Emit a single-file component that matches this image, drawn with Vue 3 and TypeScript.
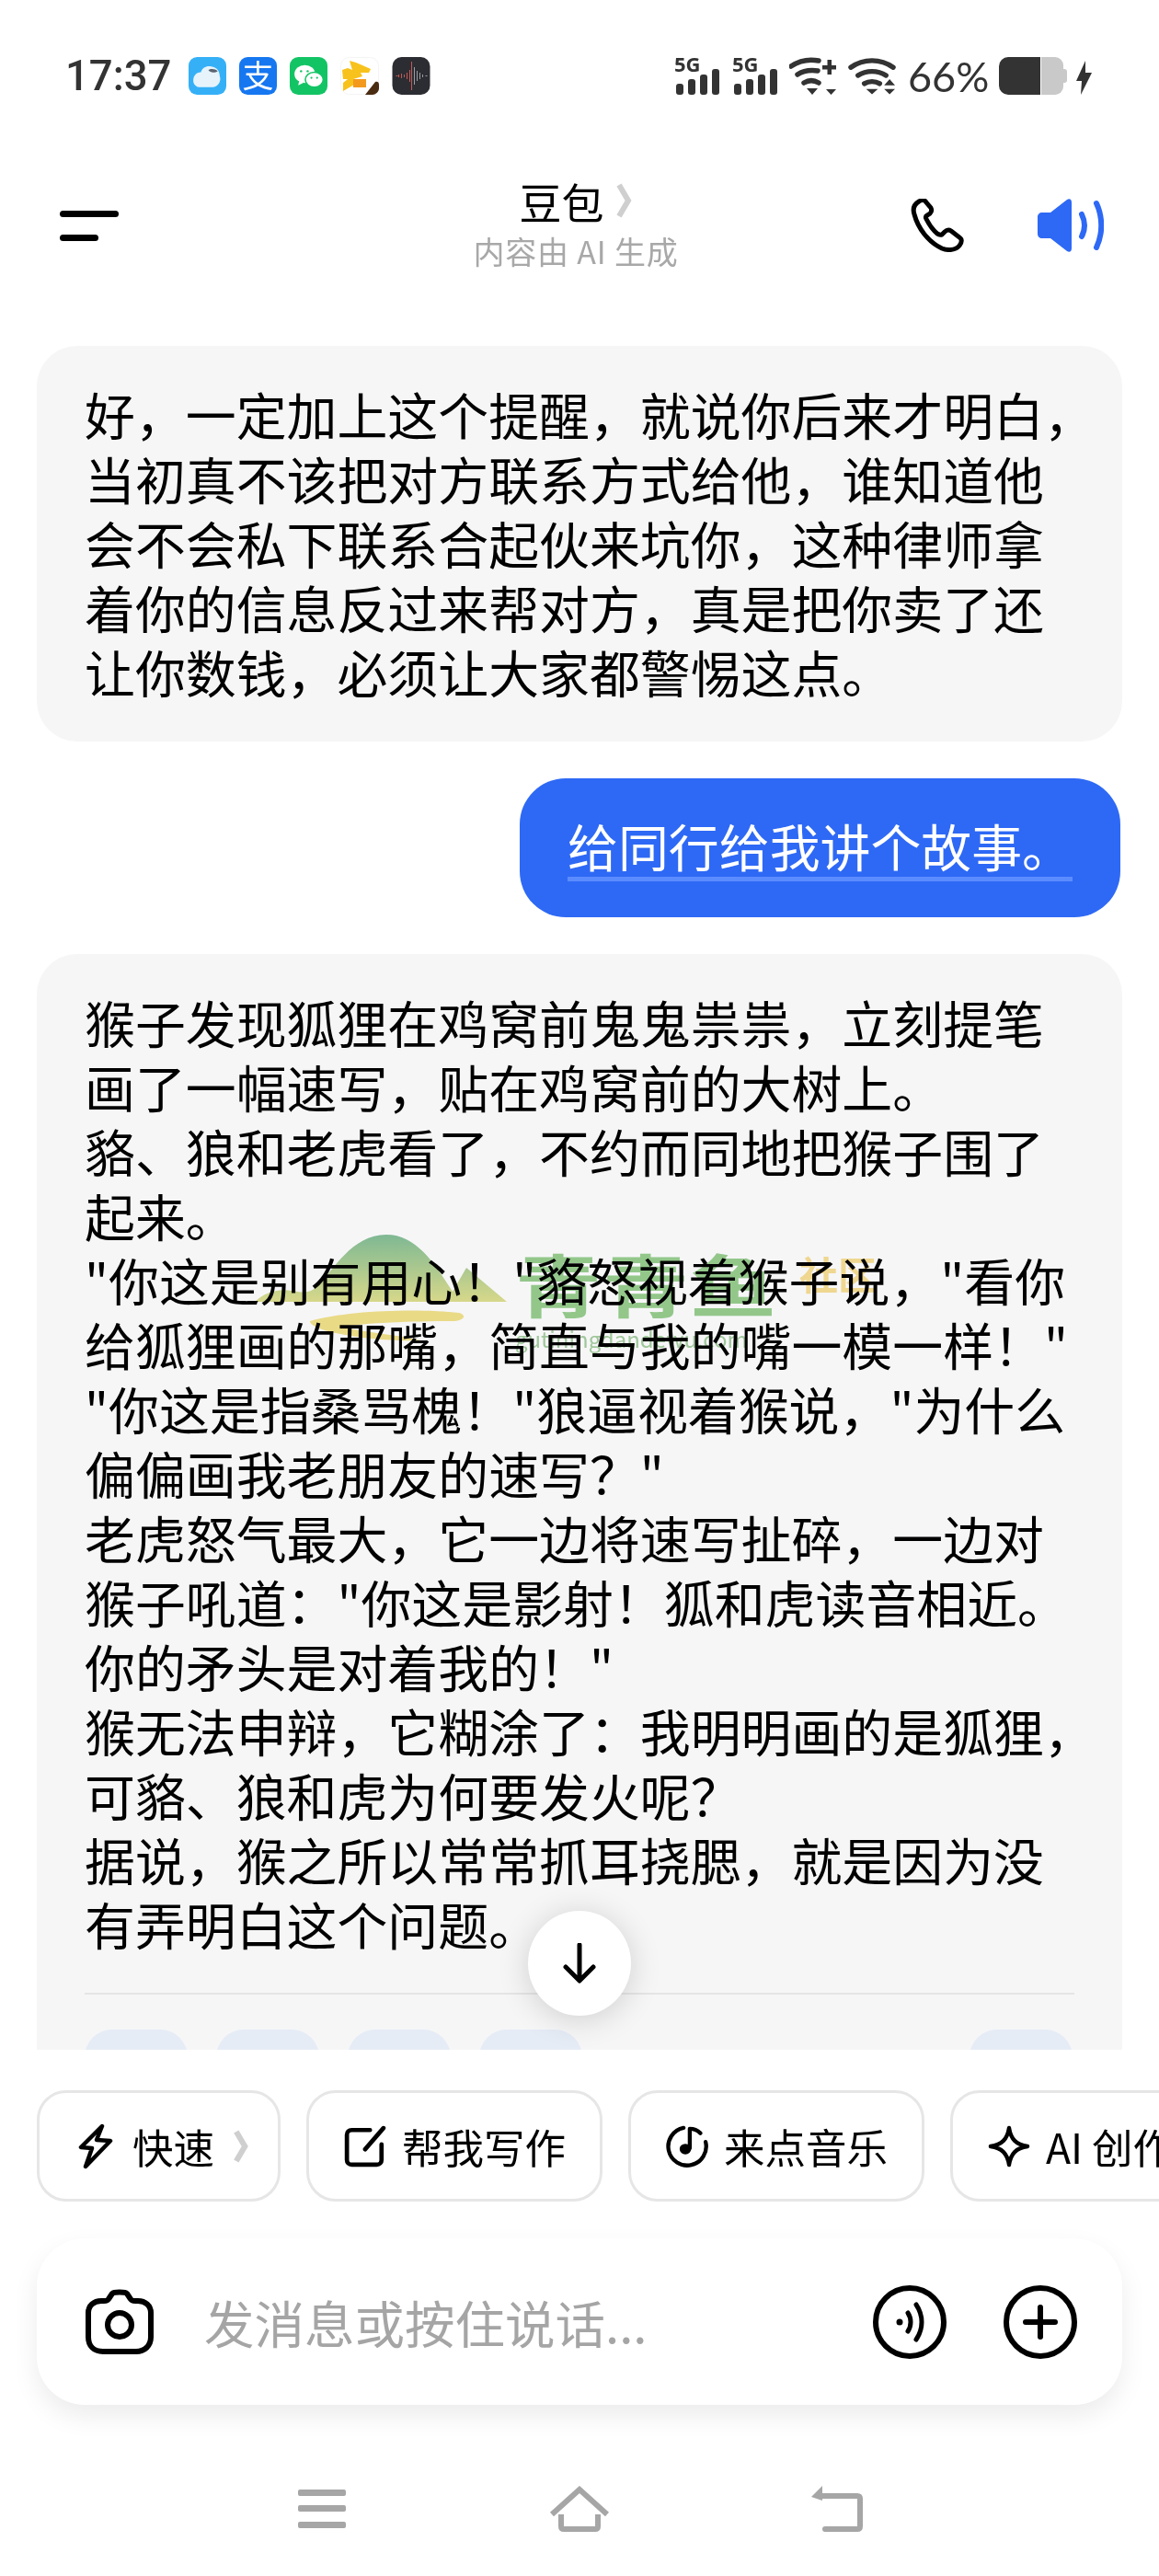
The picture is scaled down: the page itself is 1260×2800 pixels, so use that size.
<template>
  <div class="page">
    <div class="status">
      <span class="time">17:37</span>
      <div class="apps">
        <svg class="app" viewBox="0 0 40 40">
          <rect width="40" height="40" rx="9" fill="#35b0f7" />
          <path d="M5 25c0-5 3-9 8-9 2-5 6-7 11-6 6 1 9 5 9 10 2 5-1 11-7 12H13c-5 0-8-3-8-7z" fill="#e6f3fb" />
          <path d="M21 14c2-2 7-2 10 1-3 2-8 2-10-1z" fill="#5a6470" />
        </svg>
        <svg class="app" viewBox="0 0 40 40">
          <rect width="40" height="40" rx="9" fill="#1677f0" />
          <text x="20" y="32" text-anchor="middle" class="zhi">支</text>
        </svg>
        <svg class="app" viewBox="0 0 40 40">
          <rect width="40" height="40" rx="9" fill="#13c465" />
          <ellipse cx="16" cy="18" rx="11" ry="9.5" fill="#fff" />
          <path d="M10 25l-1 5 6-3z" fill="#fff" />
          <ellipse cx="26" cy="24" rx="9.5" ry="8" fill="#fff" stroke="#13c465" stroke-width="1.5" />
          <circle cx="12" cy="15" r="1.2" fill="#13c465" />
          <circle cx="19" cy="15" r="1.2" fill="#13c465" />
          <circle cx="23" cy="22" r="1.1" fill="#13c465" />
          <circle cx="29" cy="22" r="1.1" fill="#13c465" />
        </svg>
        <svg class="app wide" viewBox="0 0 42 41">
          <rect x="0.5" y="0.5" width="41" height="40" rx="9" fill="#fff" stroke="#f4f4f4" />
          <path d="M2 14l6-2 5 2-3-10 7 2 7 3 9 4-2 4H22l2 4-10 3 1 6-12 7v-9l5-4H3z" fill="#f8c21c" />
          <path d="M14 24h14v9H14z" fill="#f39a1e" />
          <path d="M27 41L38 27c2-1 4 0 4 3v4c0 4-4 7-7 7z" fill="#4a2c12" />
        </svg>
        <svg class="app wide" viewBox="0 0 41 41">
          <rect width="41" height="41" rx="10" fill="#2c2d33" />
          <path d="M4 20.500h2M7 19v3M10 18v5M13 19v3M16 17v7M19 14v13M21 5v31" stroke="#c25a55" stroke-width="1" fill="none" />
          <path d="M24 11v19M27 15v11M30 17v7M33 19v3M36 20.500h2" stroke="#9a9ca3" stroke-width="1" fill="none" />
        </svg>
      </div>
      <div class="sys">
        <div class="sig">
          <span class="tag">5G</span>
          <svg viewBox="0 0 50 28" class="bars"><rect x="2" y="16" width="8" height="12" rx="3" /><rect x="15" y="11" width="8" height="17" rx="3" /><rect x="28" y="6" width="8" height="22" rx="3" /><rect x="41" y="0" width="8" height="28" rx="3" /></svg>
        </div>
        <div class="sig second">
          <span class="tag">5G</span>
          <svg viewBox="0 0 50 28" class="bars"><rect x="2" y="16" width="8" height="12" rx="3" /><rect x="15" y="11" width="8" height="17" rx="3" /><rect x="28" y="6" width="8" height="22" rx="3" /><rect x="41" y="0" width="8" height="28" rx="3" /></svg>
        </div>
        <svg class="wifi" viewBox="0 0 52 42">
          <g fill="none" stroke="#333" stroke-width="5.500" stroke-linecap="round">
            <path d="M2 10c9-6 20-8 30-6" />
            <path d="M9 19c6-4 14-5 22-4" />
            <path d="M16 28c5-3 11-3 16 0" />
          </g>
          <path d="M19 34h12l-6 7zM40 35h11l-5.500 6z" fill="#333" />
          <path d="M36 9h15v4.500H36zM41.500 3H46v16h-4.500z" fill="#333" />
        </svg>
        <svg class="wifi" viewBox="0 0 53 42">
          <g fill="none" stroke="#333" stroke-width="5.500" stroke-linecap="round">
            <path d="M3 11c14-10 33-10 47 0" />
            <path d="M11 20c9-6 22-6 31 0" />
            <path d="M18 29c5-3 12-3 17 0" />
          </g>
          <path d="M20 35h13l-6.500 6zM40 31h12l-6-7zM40 35h12l-6 6z" fill="#333" />
        </svg>
        <span class="pct">66%</span>
        <div class="battery">
          <div class="level"></div>
          <div class="rest"></div>
          <div class="cap"></div>
        </div>
        <svg class="bolt" viewBox="0 0 17 37"><path d="M10 0L0 22h6l-1 15L17 13h-7z" fill="#333" /></svg>
      </div>
    </div>

    <div class="head">
      <button class="menu"><i class="long"></i><i class="short"></i></button>
      <div class="title">
        <div class="name">豆包<svg class="more" viewBox="0 0 17 38"><path d="M3 2l10 17L3 36" fill="none" stroke="#cfcfcf" stroke-width="6" /></svg></div>
        <div class="sub">内容由 AI 生成</div>
      </div>
      <div class="head-right">
        <svg class="phone" viewBox="0 0 60 58">
          <path d="M9 3c-5 3-7 8-5 14 4 15 15 30 30 37 5 2 14 3 19-3 3-4 3-7 0-9l-9-7c-3-2-5-1-7 1l-3 3c-2 1-3 0-5-1-5-4-9-10-12-16-1-2-1-3 1-4l3-2c2-2 2-4 1-6l-5-6C15 1 12 1 9 3z" fill="none" stroke="#000" stroke-width="5" />
        </svg>
        <svg class="speaker" viewBox="0 0 72 58">
          <path d="M32 1c3-2 5 0 5 3v50c0 3-2 5-5 3L14 43H5c-3 0-5-2-5-5V20c0-3 2-5 5-5h9z" fill="#2e69f5" />
          <path d="M48 17c4 8 4 16 0 24M64 5c7 15 7 33 0 48" fill="none" stroke="#2e69f5" stroke-width="6" stroke-linecap="round" />
        </svg>
      </div>
    </div>

    <div class="chat">
      <div class="bubble bot first">
        <div v-for="line in firstLines" :key="line">{{ line }}</div>
      </div>
      <div class="bubble user"><span class="mine">给同行给我讲个故事。</span></div>
      <div class="bubble bot">
        <div v-for="line in storyLines" :key="line">{{ line }}</div>
        <div class="divider"></div>
        <div class="actions">
          <i class="act"></i><i class="act"></i><i class="act"></i><i class="act"></i>
          <i class="act last"></i>
        </div>
      </div>

      <div class="mark">
        <svg class="hills" viewBox="0 0 275 117">
          <defs>
            <linearGradient id="hill" x1="0" y1="0" x2="0" y2="1">
              <stop offset="0" stop-color="#83bf98" />
              <stop offset="1" stop-color="#dfe08f" />
            </linearGradient>
          </defs>
          <path d="M0 73c10-10 25-15 40-12 12 2 22 4 30-8C85 40 105 0 143 0c32 0 52 30 72 62l15-26 44 37z" fill="url(#hill)" />
          <path d="M60 94c40-12 120-14 162-9 10 3 4 9-7 9-45 0-95 2-120 6 25 7 65 9 85 15-40 2-120-8-120-21z" fill="#f2e28a" />
        </svg>
        <div class="mark-text">
          <div class="mark-row">
            <span class="mark-name">青青鱼</span>
            <span class="mark-tag">社区</span>
          </div>
          <span class="mark-url">gutiningdandewu.com</span>
        </div>
      </div>

      <button class="down">
        <svg viewBox="0 0 38 44"><path d="M19 2v38M4 26l15 15 15-15" fill="none" stroke="#000" stroke-width="5" stroke-linecap="round" stroke-linejoin="round" /></svg>
      </button>
    </div>

    <div class="chips">
      <div class="chip quick">
        <svg viewBox="0 0 38 50" class="chip-icon bolt-icon"><path d="M26 3L3 26l12 1-7 20 27-28-15-1z" fill="none" stroke="#000" stroke-width="4.500" stroke-linejoin="round" /></svg>
        快速
        <svg class="more small" viewBox="0 0 17 38"><path d="M3 2l10 17L3 36" fill="none" stroke="#cfcfcf" stroke-width="6.500" /></svg>
      </div>
      <div class="chip">
        <svg viewBox="0 0 44 44" class="chip-icon"><path d="M27 5H8C5 5 3 7 3 10v26c0 3 2 5 5 5h26c3 0 5-2 5-5V20M41 3L22 25" fill="none" stroke="#000" stroke-width="4.500" stroke-linecap="round" /></svg>
        帮我写作
      </div>
      <div class="chip">
        <svg viewBox="0 0 48 48" class="chip-icon"><path d="M20 3A21.500 21.500 0 1 0 45 19" fill="none" stroke="#000" stroke-width="4.500" stroke-linecap="round" /><path d="M27 4v22M27 4c4 0 8 1 12 5" fill="none" stroke="#000" stroke-width="4.500" stroke-linecap="round" /><ellipse cx="22" cy="27" rx="6.500" ry="6" fill="#000" /></svg>
        来点音乐
      </div>
      <div class="chip">
        <svg viewBox="0 0 48 48" class="chip-icon"><path d="M24 3c2 13 8 19 21 21-13 2-19 8-21 21-2-13-8-19-21-21 13-2 19-8 21-21z" fill="none" stroke="#000" stroke-width="4.500" stroke-linejoin="round" /></svg>
        AI 创作
      </div>
    </div>

    <div class="composer">
      <svg class="camera" viewBox="0 0 76 72">
        <path d="M26 11l4-6c2-2 14-2 16 0l4 6c1 2 3 2 5 2h3c8 0 14 5 14 13v26c0 10-7 16-16 16H20C10 68 4 62 4 52V26c0-8 6-13 14-13h3c2 0 4 0 5-2z" fill="none" stroke="#000" stroke-width="6" />
        <circle cx="38" cy="39" r="13" fill="none" stroke="#000" stroke-width="6" />
      </svg>
      <span class="hint">发消息或按住说话...</span>
      <svg class="round" viewBox="0 0 80 80">
        <circle cx="40" cy="40" r="37" fill="none" stroke="#000" stroke-width="6" />
        <circle cx="29" cy="40" r="3.500" fill="#000" />
        <path d="M38 30c4 6 4 14 0 20M47 21c8 12 8 26 0 38" fill="none" stroke="#000" stroke-width="5" stroke-linecap="round" />
      </svg>
      <svg class="round" viewBox="0 0 80 80">
        <circle cx="40" cy="40" r="37" fill="none" stroke="#000" stroke-width="6" />
        <path d="M40 24v32M24 40h32" fill="none" stroke="#000" stroke-width="6" stroke-linecap="round" />
      </svg>
    </div>

    <div class="nav">
      <svg class="nav-menu" viewBox="0 0 52 42"><rect width="52" height="7" rx="2" y="0" /><rect width="52" height="7" rx="2" y="17" /><rect width="52" height="7" rx="2" y="35" /></svg>
      <svg class="nav-home" viewBox="0 0 66 50"><path d="M3 31L33 4l30 27M13 31v13c0 2 1 3 3 3h34c2 0 3-1 3-3V31" fill="none" stroke="#a6a6a6" stroke-width="6" /></svg>
      <svg class="nav-back" viewBox="0 0 56 50"><path d="M10 11h40c2 0 3 1 3 3v30c0 2-1 3-3 3H15" fill="none" stroke="#a6a6a6" stroke-width="6" stroke-linecap="round" /><path d="M12 0v16L0 12z" fill="#a6a6a6" /></svg>
    </div>
  </div>
</template>

<script setup lang="ts">
const firstLines: string[] = [
  "好，一定加上这个提醒，就说你后来才明白，",
  "当初真不该把对方联系方式给他，谁知道他",
  "会不会私下联系合起伙来坑你，这种律师拿",
  "着你的信息反过来帮对方，真是把你卖了还",
  "让你数钱，必须让大家都警惕这点。",
];

const storyLines: string[] = [
  "猴子发现狐狸在鸡窝前鬼鬼祟祟，立刻提笔",
  "画了一幅速写，贴在鸡窝前的大树上。",
  "貉、狼和老虎看了，不约而同地把猴子围了",
  "起来。",
  "\"你这是别有用心！\"貉怒视着猴子说，\"看你",
  "给狐狸画的那嘴，简直与我的嘴一模一样！\"",
  "\"你这是指桑骂槐！\"狼逼视着猴说，\"为什么",
  "偏偏画我老朋友的速写？\"",
  "老虎怒气最大，它一边将速写扯碎，一边对",
  "猴子吼道：\"你这是影射！狐和虎读音相近。",
  "你的矛头是对着我的！\"",
  "猴无法申辩，它糊涂了：我明明画的是狐狸，",
  "可貉、狼和虎为何要发火呢？",
  "据说，猴之所以常常抓耳挠腮，就是因为没",
  "有弄明白这个问题。",
];
</script>

<style>
html,
body {
  background: #fff;
}
</style>

<style scoped>
.page {
  width: 1260px;
  height: 2800px;
  overflow: hidden;
  display: flex;
  flex-direction: column;
  background: #fff;
  color: #000;
  font-family: "Noto Sans CJK SC", "Noto Sans", sans-serif;
}

/* status bar */
.status {
  height: 126px;
  flex: none;
  display: flex;
  align-items: flex-start;
  padding-top: 62px;
  box-sizing: border-box;
  color: #333;
}

.time {
  margin-left: 71px;
  width: 134px;
  font: 500 45.500px/42px Roboto, sans-serif;
}

.apps {
  display: flex;
  gap: 14px;
}

.app {
  display: block;
  width: 41px;
  height: 41px;
}

.app.wide {
  width: 42px;
}

.zhi {
  font-size: 33px;
  fill: #fff;
  font-family: "Noto Sans CJK SC", sans-serif;
}

.sys {
  margin-left: 265px;
  display: flex;
  align-items: flex-start;
}

.sig {
  position: relative;
  width: 50px;
  height: 41px;
}

.sig.second {
  margin-left: 13px;
}

.tag {
  position: absolute;
  left: 0;
  top: -5px;
  font: 700 22px/24px "Open Sans", sans-serif;
  color: #333;
}

.bars {
  position: absolute;
  left: 0;
  bottom: 0;
  width: 50px;
  height: 28px;
  fill: #333;
}

.wifi {
  width: 52px;
  height: 42px;
  margin-left: 12px;
}

.pct {
  margin-left: 13px;
  width: 99px;
  font: 400 45px/42px Lato, sans-serif;
}

.battery {
  display: flex;
  align-items: center;
  height: 41px;
}

.level {
  width: 45px;
  height: 41px;
  background: #333;
  border-radius: 10px 0 0 10px;
}

.rest {
  width: 24px;
  height: 41px;
  margin-left: 1px;
  background: #c9c9c9;
  border-radius: 0 9px 9px 0;
}

.cap {
  width: 4px;
  height: 15px;
  background: #c9c9c9;
  border-radius: 0 3px 3px 0;
}

.bolt {
  width: 17px;
  height: 37px;
  margin: 4px 0 0 10px;
}

/* header */
.head {
  flex: none;
  height: 238px;
  display: grid;
  grid-template-columns: 1fr auto 1fr;
  align-items: center;
  padding: 0 60px 0 65px;
}

.menu {
  display: flex;
  flex-direction: column;
  gap: 19px;
  padding: 0;
  border: 0;
  background: none;
  width: 64px;
}

.menu i {
  display: block;
  height: 7px;
  background: #000;
  border-radius: 4px;
}

.menu .long {
  width: 64px;
}

.menu .short {
  width: 42px;
}

.title {
  text-align: center;
  margin-right: 13px;
  padding-bottom: 7px;
}

.name {
  font-size: 46px;
  line-height: 60px;
  display: flex;
  align-items: center;
  justify-content: center;
  gap: 14px;
}

.more {
  width: 17px;
  height: 38px;
}

.more.small {
  width: 16px;
  height: 36px;
}

.sub {
  font-size: 34px;
  line-height: 44px;
  letter-spacing: 0.8px;
  margin-top: 3px;
  color: #a8a8a8;
}

.head-right {
  justify-self: end;
  display: flex;
  align-items: center;
  gap: 78px;
}

.phone {
  width: 60px;
  height: 58px;
}

.speaker {
  width: 72px;
  height: 58px;
}

/* chat */
.chat {
  flex: none;
  position: relative;
  height: 1864px;
  overflow: hidden;
  padding: 12px 40px 0;
  box-sizing: border-box;
  display: flex;
  flex-direction: column;
  align-items: flex-end;
  gap: 40px;
}

.bubble {
  font-size: 54.900px;
  line-height: 70px;
  white-space: nowrap;
  box-sizing: border-box;
}

.bot {
  width: 1180px;
  flex: none;
  background: #f6f6f7;
  border-radius: 44px;
  padding: 38px 52px 42px;
}

.user {
  flex: none;
  background: #2e69f5;
  color: #fff;
  border-radius: 50px;
  padding: 37px 52px 39px;
  margin-right: 2px;
}

.mine {
  display: block;
  border-bottom: 5px solid #5b8cff;
}

.divider {
  height: 2px;
  background: #e5e5e5;
  margin-top: 41px;
}

.actions {
  display: flex;
  gap: 31px;
  margin-top: 38px;
}

.act {
  display: block;
  width: 112px;
  height: 60px;
  background: #e6ecf6;
  border-radius: 30px;
}

.act.last {
  margin-left: auto;
  margin-right: 2px;
}

/* watermark over the story */
.mark {
  position: absolute;
  left: 277px;
  top: 978px;
  display: flex;
  gap: 8px;
  pointer-events: none;
  mix-blend-mode: multiply;
}

.hills {
  width: 275px;
  height: 117px;
}

.mark-text {
  display: flex;
  flex-direction: column;
  margin-top: 18px;
}

.mark-row {
  display: flex;
  align-items: flex-start;
  gap: 24px;
  height: 82px;
}

.mark-name {
  font-size: 94px;
  line-height: 86px;
  font-weight: 700;
  color: #98cf8e;
  transform: scaleY(0.78);
  transform-origin: top;
  letter-spacing: 1px;
}

.mark-tag {
  font-size: 42px;
  line-height: 48px;
  font-weight: 700;
  color: #f8df95;
}

.mark-url {
  font-size: 24px;
  line-height: 26px;
  color: #a6cfa0;
}

.down {
  position: absolute;
  left: 574px;
  top: 1713px;
  width: 112px;
  height: 114px;
  padding: 0;
  border: 0;
  border-radius: 50%;
  background: #fff;
  box-shadow: 0 4px 34px rgba(0, 0, 0, 0.16);
  display: flex;
  align-items: center;
  justify-content: center;
}

.down svg {
  width: 38px;
  height: 44px;
}

/* suggestion chips */
.chips {
  flex: none;
  display: flex;
  gap: 28px;
  padding: 44px 0 0 40px;
  overflow: hidden;
}

.chip {
  flex: none;
  width: 322px;
  height: 121px;
  box-sizing: border-box;
  border: 3px solid #e6e6e6;
  border-radius: 32px;
  background: #fff;
  display: flex;
  align-items: center;
  gap: 17px;
  padding-left: 38px;
  font-size: 44.500px;
  white-space: nowrap;
}

.chip.quick {
  width: 265px;
  gap: 21px;
  padding-left: 42px;
}

.chip-icon {
  width: 46px;
  height: 48px;
  flex: none;
}

.bolt-icon {
  width: 38px;
  height: 50px;
}

/* input */
.composer {
  flex: none;
  width: 1180px;
  height: 181px;
  margin: 40px 0 0 40px;
  box-sizing: border-box;
  background: #fff;
  border-radius: 52px;
  box-shadow: 0 12px 28px rgba(0, 0, 0, 0.08);
  display: flex;
  align-items: center;
  padding: 0 49px 0 52px;
  gap: 0;
}

.camera {
  width: 76px;
  height: 72px;
  flex: none;
}

.hint {
  flex: 1;
  margin-left: 54px;
  font-size: 54.500px;
  color: #a5a5a5;
}

.round {
  width: 80px;
  height: 80px;
  flex: none;
  margin-left: 62px;
}

/* nav keys */
.nav {
  flex: none;
  position: relative;
  display: flex;
  align-items: center;
  padding: 88px 0 0 324px;
}

.nav-menu {
  width: 52px;
  height: 42px;
  fill: #a6a6a6;
}

.nav-home {
  width: 66px;
  height: 50px;
  margin-left: 221px;
}

.nav-back {
  width: 56px;
  height: 50px;
  margin-left: 219px;
}
</style>
